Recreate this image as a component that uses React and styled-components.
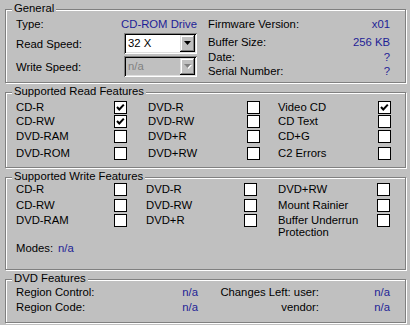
import styled, { createGlobalStyle } from 'styled-components';

const GlobalStyle = createGlobalStyle`
  html, body {
    margin: 0;
    padding: 0;
    background: #c0c0c0;
  }
  body {
    font-family: "Liberation Sans", Arial, sans-serif;
    font-size: 11.3px;
    color: #000;
  }
`;

const Dialog = styled.div`
  width: 410px;
  height: 325px;
  box-sizing: border-box;
  padding: 9px 4px 0 5px;
  display: flex;
  flex-direction: column;
  gap: 9px;
  overflow: hidden;
`;

const Group = styled.div`
  position: relative;
  flex: none;
  height: ${(p) => p.$height}px;
  box-sizing: border-box;
  border: 1px solid #808080;
  box-shadow: inset 1px 1px #fff, 1px 1px #fff;
  padding: ${(p) => p.$pad};
`;

const Caption = styled.span`
  position: absolute;
  top: -8px;
  left: 6px;
  padding: 0 2px;
  background: #c0c0c0;
  line-height: 13px;
  white-space: nowrap;
`;

const GeneralBody = styled.div`
  display: grid;
  grid-template-columns: 181px 182px;
  column-gap: 11px;
`;

const Column = styled.div`
  display: grid;
  grid-template-rows: ${(p) => p.$rows};
  align-items: start;
`;

const InfoRow = styled.div`
  display: flex;
  justify-content: space-between;
  align-items: center;
  line-height: 14px;
  white-space: nowrap;
`;

const Value = styled.span`
  color: #1e1e96;
  text-align: ${(p) => p.$align || 'right'};
`;

const Combo = styled.div`
  width: 73px;
  height: 21px;
  box-sizing: border-box;
  padding: 2px;
  display: flex;
  background: ${(p) => (p.$disabled ? '#c0c0c0' : '#fff')};
  box-shadow: inset 1px 1px #808080, inset -1px -1px #fff, inset 2px 2px #000,
    inset -2px -2px #dfdfdf;
`;

const ComboText = styled.span`
  flex: 1;
  padding-left: 2px;
  line-height: 17px;
  color: ${(p) => (p.$disabled ? '#808080' : '#000')};
`;

const DropButton = styled.span`
  width: 15px;
  height: 17px;
  box-sizing: border-box;
  background: #c0c0c0;
  box-shadow: inset -1px -1px #000, inset 1px 1px #dfdfdf, inset -2px -2px #808080,
    inset 2px 2px #fff;
  display: flex;
  align-items: center;
  justify-content: center;
`;

const FeatureGrid = styled.div`
  display: grid;
  grid-template-columns: ${(p) => p.$cols};
  grid-template-rows: ${(p) => p.$rows};
  align-items: start;
  line-height: 12px;
`;

const Box = styled.span`
  width: 13px;
  height: 13px;
  box-sizing: border-box;
  border: 1px solid #000;
  background: #fff;
  display: flex;
  align-items: center;
  justify-content: center;
`;

const ModesRow = styled.div`
  display: flex;
  gap: 5px;
  margin-top: 4px;
  line-height: 12px;
`;

const DvdGrid = styled.div`
  display: grid;
  grid-template-columns: 120px 62px 121px 71px;
  grid-template-rows: 15px 15px;
  line-height: 12px;
  white-space: nowrap;

  & > span:not(:first-child):not(:nth-child(5)) {
    text-align: right;
  }
`;

const Arrow = ({ disabled }) => (
  <svg width="8" height="5" viewBox="0 0 8 5">
    {disabled && <polygon points="1,1 8,1 4.5,5" fill="#fff" />}
    <polygon points="0,0 7,0 3.5,4" fill={disabled ? '#808080' : '#000'} />
  </svg>
);

const Select = ({ value, disabled }) => (
  <Combo $disabled={disabled}>
    <ComboText $disabled={disabled}>{value}</ComboText>
    <DropButton>
      <Arrow disabled={disabled} />
    </DropButton>
  </Combo>
);

const CheckBox = ({ checked }) => (
  <Box>
    {checked && (
      <svg width="11" height="11" viewBox="0 0 11 11">
        <path d="M2 5 L4.3 7.5 L8.8 2.6" stroke="#000" strokeWidth="2" fill="none" />
      </svg>
    )}
  </Box>
);

const readFeatures = [
  ['CD-R', true, 'DVD-R', false, 'Video CD', true],
  ['CD-RW', true, 'DVD-RW', false, 'CD Text', false],
  ['DVD-RAM', false, 'DVD+R', false, 'CD+G', false],
  ['DVD-ROM', false, 'DVD+RW', false, 'C2 Errors', false],
];

const writeFeatures = [
  ['CD-R', false, 'DVD-R', false, 'DVD+RW', false],
  ['CD-RW', false, 'DVD-RW', false, 'Mount Rainier', false],
  ['DVD-RAM', false, 'DVD+R', false, 'Buffer Underrun Protection', false],
];

const renderFeatures = (rows) =>
  rows.flatMap((row, i) =>
    [0, 2, 4].flatMap((c) => [
      <span key={`${i}-${c}`}>{row[c]}</span>,
      <CheckBox key={`${i}-${c}-box`} checked={row[c + 1]} />,
    ])
  );

export default function App() {
  return (
    <>
      <GlobalStyle />
      <Dialog>
        <Group $height={74} $pad="7px 0 0 10px">
          <Caption>General</Caption>
          <GeneralBody>
            <Column $rows="16px 23px 21px">
              <InfoRow>
                <span>Type:</span>
                <Value>CD-ROM Drive</Value>
              </InfoRow>
              <InfoRow>
                <span>Read Speed:</span>
                <Select value="32 X" />
              </InfoRow>
              <InfoRow>
                <span>Write Speed:</span>
                <Select value="n/a" disabled />
              </InfoRow>
            </Column>
            <Column $rows="18px 15px 14px 14px">
              <InfoRow>
                <span>Firmware Version:</span>
                <Value>x01</Value>
              </InfoRow>
              <InfoRow>
                <span>Buffer Size:</span>
                <Value>256 KB</Value>
              </InfoRow>
              <InfoRow>
                <span>Date:</span>
                <Value>?</Value>
              </InfoRow>
              <InfoRow>
                <span>Serial Number:</span>
                <Value>?</Value>
              </InfoRow>
            </Column>
          </GeneralBody>
        </Group>

        <Group $height={76} $pad="8px 0 0 10px">
          <Caption>Supported Read Features</Caption>
          <FeatureGrid $cols="98px 34px 99px 31px 100px 13px" $rows="14px 15px 17px 15px">
            {renderFeatures(readFeatures)}
          </FeatureGrid>
        </Group>

        <Group $height={93} $pad="5px 0 0 10px">
          <Caption>Supported Write Features</Caption>
          <FeatureGrid $cols="98px 32px 98px 34px 99px 13px" $rows="16px 15px auto">
            {renderFeatures(writeFeatures)}
          </FeatureGrid>
          <ModesRow>
            <span>Modes:</span>
            <Value>n/a</Value>
          </ModesRow>
        </Group>

        <Group $height={44} $pad="6px 0 0 10px">
          <Caption>DVD Features</Caption>
          <DvdGrid>
            <span>Region Control:</span>
            <Value>n/a</Value>
            <span>Changes Left: user:</span>
            <Value>n/a</Value>
            <span>Region Code:</span>
            <Value>n/a</Value>
            <span>vendor:</span>
            <Value>n/a</Value>
          </DvdGrid>
        </Group>
      </Dialog>
    </>
  );
}
